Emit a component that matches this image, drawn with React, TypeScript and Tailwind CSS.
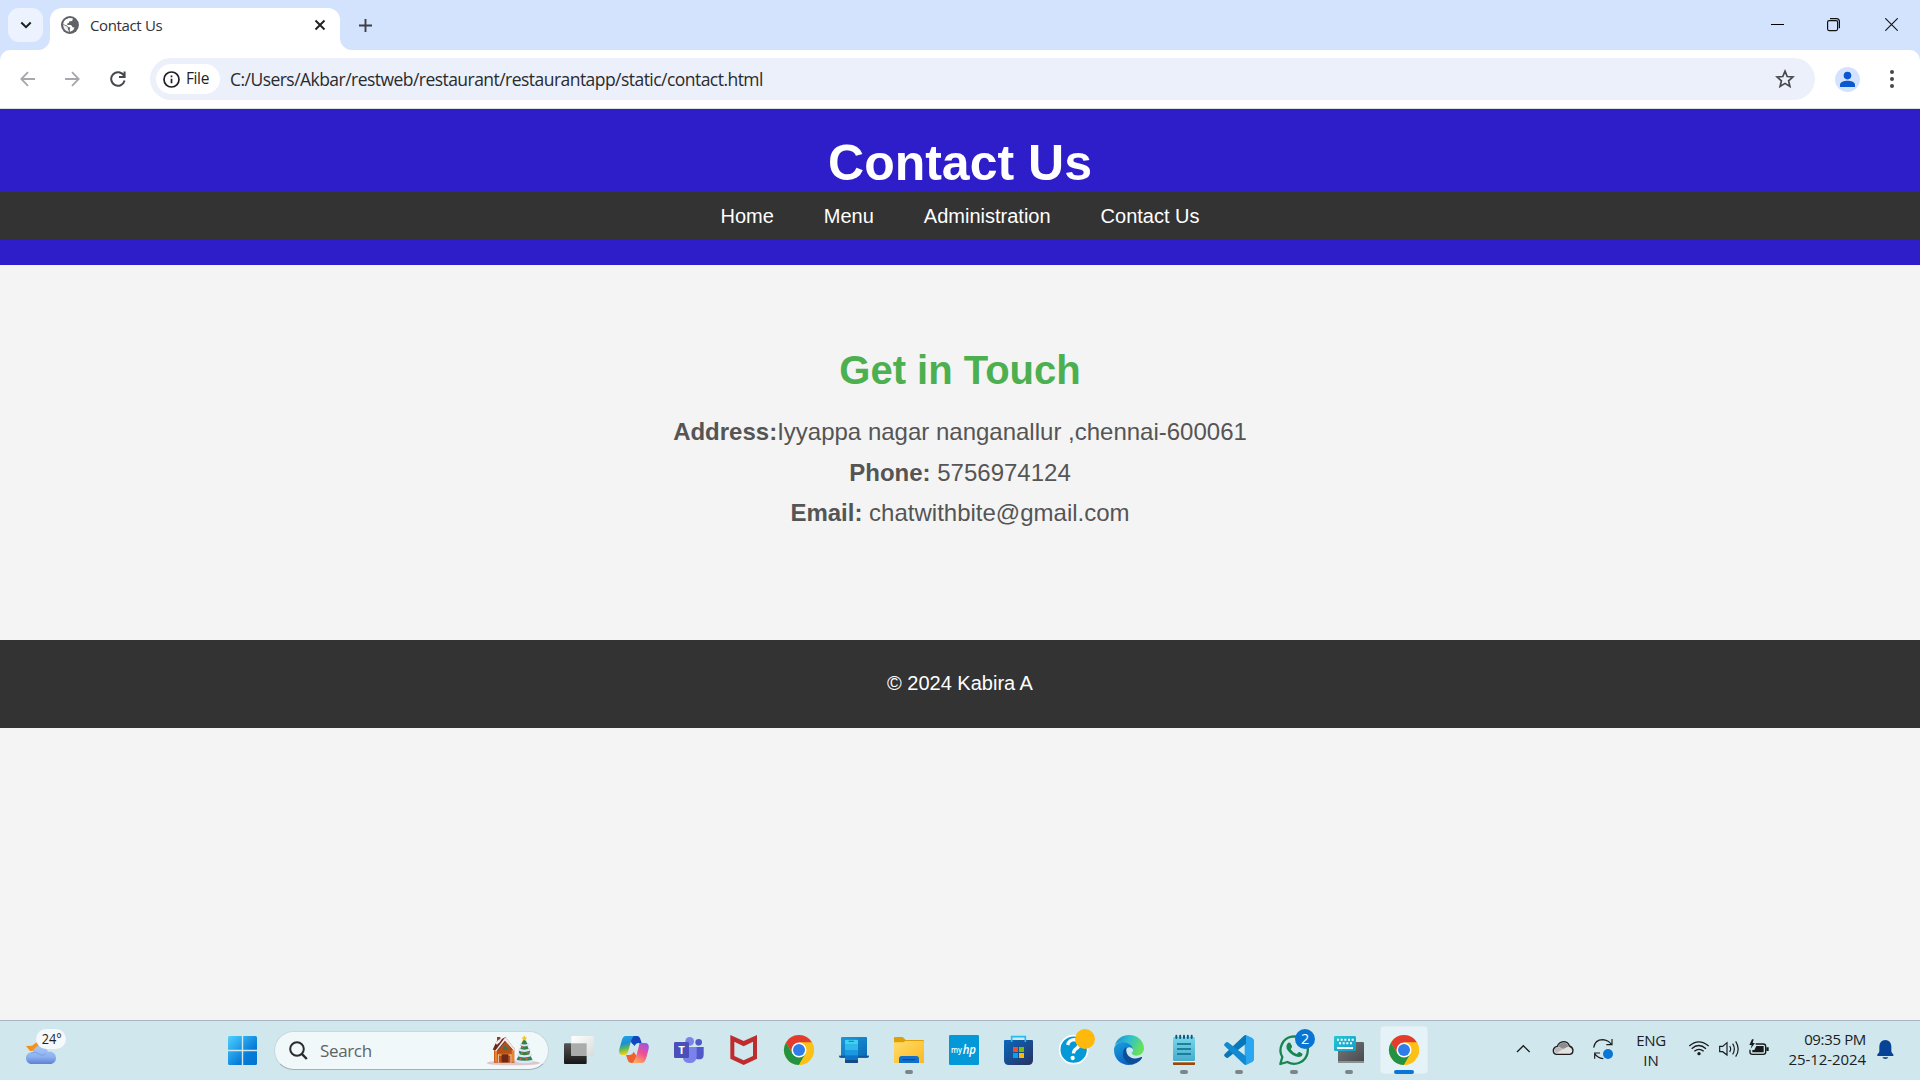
import React from "react";

const UI = "font-['Open_Sans','Noto_Sans',sans-serif]";

function Chrome({ x }: { x: number }) {
  return (
    <g transform={`translate(${x} 120)`}>
      <circle r="45" fill="#fbc116" />
      <path d="M-39 -22.5A45 45 0 0 1 39 -22.5L0 -22.5L-19.5 11.2Z" fill="#e33b2e" />
      <path d="M-39 -22.5A45 45 0 0 0 0 45L19.5 11.2L-19.5 11.2Z" fill="#229342" />
      <path d="M0 -22.5H39A45 45 0 0 1 0 45L19.5 11.2Z" fill="#fbc116" />
      <circle r="22.5" fill="#fff" />
      <circle r="18" fill="#2f7de9" />
    </g>
  );
}

function Cell({ left, children }: { left: number; children: React.ReactNode }) {
  return (
    <svg className="h-[60px] w-[55px] shrink-0" viewBox={`${left} 30 165 180`}>
      {children}
    </svg>
  );
}

function Running({ x }: { x: number }) {
  return <rect x={x - 12} y="180" width="24" height="12" rx="6" fill="#7c8587" />;
}

function TabStrip() {
  return (
    <div className="flex h-[50px] bg-[#d3e3fd]">
      <div className="mt-2 ml-2 flex h-[34px] w-[35px] items-center justify-center rounded-[11px] bg-[#ecf2fe]">
        <svg className="size-3" viewBox="0 0 12 12" fill="none" stroke="#1f1f1f" strokeWidth="2">
          <path d="M1.3 3.5 6 8.2 10.7 3.5" />
        </svg>
      </div>
      <svg className="-mr-3 ml-[-5px] mt-[38px] h-3 w-3" viewBox="0 0 12 12">
        <path d="M12 0A12 12 0 0 1 0 12H12Z" fill="#fff" />
      </svg>
      <div className="mt-2 ml-[12px] flex h-[42px] w-[290px] items-center rounded-t-[12px] bg-white pb-2">
        <svg className="ml-[11px] size-[18px]" viewBox="0 0 18 18">
          <circle cx="9" cy="9" r="9" fill="#5f6368" />
          <path d="M11.8 2.2 11.6 4.2Q11.2 5.4 9.6 5.3L8.2 5.6 7.7 7.1 6.2 7.6 6.4 9 9.6 9.1Q11.3 9.5 11.5 11.2L13.5 11.5Q12.8 14.7 9.2 15.8L8.7 13.4 9.4 11.6 7.2 10.9 5.6 9.2 2.1 8.2Q2.4 4.8 5 3.3L6.8 2.8 7.4 1.9Z" fill="#fff" />
          <path d="M2.1 8.7 5.2 10 7 11.7 6.9 13.3 8.6 15.8Q2.6 15.2 2.1 8.7Z" fill="#fff" opacity=".9" />
        </svg>
        <span className="ml-[11px] w-[225px] text-[15px] tracking-[-0.35px] text-[#303236]">Contact Us</span>
        <svg className="mr-[14px] size-[12px] shrink-0" viewBox="0 0 12 12" stroke="#1f1f1f" strokeWidth="1.9">
          <path d="M1.5 1.5 10.5 10.5M10.5 1.5 1.5 10.5" />
        </svg>
      </div>
      <svg className="mt-[38px] h-3 w-3" viewBox="0 0 12 12">
        <path d="M0 0A12 12 0 0 0 12 12H0Z" fill="#fff" />
      </svg>
      <svg className="mt-[19px] ml-[7px] size-[13px]" viewBox="0 0 13 13" stroke="#3c3f43" strokeWidth="1.9">
        <path d="M6.5 0V13M0 6.5H13" />
      </svg>
      <div className="ml-auto flex h-[50px] items-start">
        <svg className="mt-[17px] mr-[43px] h-4 w-[13px]" viewBox="0 0 13 16" stroke="#000" strokeWidth="1">
          <path d="M0 7.5H13" />
        </svg>
        <svg className="mt-[17px] mr-[45px] h-[15px] w-[13px]" viewBox="0 0 13 15" fill="none" stroke="#111" strokeWidth="1.2">
          <rect x=".6" y="3.6" width="10" height="10" rx="1.5" />
          <path d="M3 1.6H9.5Q12.4 1.6 12.4 4.5V11.2" />
        </svg>
        <svg className="mt-[18px] mr-[22px] size-[13px]" viewBox="0 0 13 13" stroke="#111" strokeWidth="1.1">
          <path d="M.3.3 12.7 12.7M12.7.3.3 12.7" />
        </svg>
      </div>
    </div>
  );
}

function Toolbar() {
  return (
    <div className="bg-[#d3e3fd]">
      <div className="flex h-[59px] items-center rounded-t-[10px] border-b border-[#dcdfe0] bg-white">
        <svg className="ml-5 h-4 w-[15px]" viewBox="0 0 15 16" fill="none" stroke="#a6a8ab" strokeWidth="1.8">
          <path d="M15 8H1.5M8 1.2 1.3 8 8 14.8" />
        </svg>
        <svg className="ml-[30px] h-4 w-[15px]" viewBox="0 0 15 16" fill="none" stroke="#a6a8ab" strokeWidth="1.8">
          <path d="M0 8H13.5M7 1.2 13.7 8 7 14.8" />
        </svg>
        <svg className="ml-[30px] size-4" viewBox="0 0 16 16" fill="none" stroke="#45484c" strokeWidth="2">
          <path d="M13.9 4.6A6.8 6.8 0 1 0 14.6 9.6M14.6 .5V6.1H9" />
        </svg>
        <div className="ml-6 flex h-[42px] w-[1665px] items-center rounded-full bg-[#ecf0fa]">
          <div className="ml-1.5 flex h-[30px] w-16 items-center rounded-full bg-white">
            <svg className="ml-[7px] size-[17px]" viewBox="0 0 17 17" fill="none" stroke="#1f1f1f" strokeWidth="1.7">
              <circle cx="8.5" cy="8.5" r="7.5" />
              <path d="M8.5 7.7V12.3M8.5 4.5V6.2" />
            </svg>
            <span className="ml-[6px] text-[15.5px] tracking-[-0.4px] text-[#1f1f1f]">File</span>
          </div>
          <span className="ml-[10px] text-[17.5px] tracking-[-0.54px] whitespace-nowrap text-[#292b2e]">
            C:/Users/Akbar/restweb/restaurant/restaurantapp/static/contact.html
          </span>
          <svg className="mr-5 ml-auto size-5" viewBox="0 0 20 20" fill="none" stroke="#45484c" strokeWidth="1.7">
            <path d="M10 2.2 12.2 7.5 17.9 8 13.6 11.8 14.9 17.4 10 14.4 5.1 17.4 6.4 11.8 2.1 8 7.8 7.5Z" />
          </svg>
        </div>
        <svg className="ml-5 size-[25px]" viewBox="0 0 25 25">
          <circle cx="12.5" cy="12.5" r="12.5" fill="#d3e3fd" />
          <circle cx="12.5" cy="8.6" r="3.8" fill="#0b57d0" />
          <path d="M5 20V17.8C5 15.2 9 13.8 12.5 13.8S20 15.2 20 17.8V20Z" fill="#0b57d0" />
        </svg>
        <svg className="ml-[30px] h-[18px] w-1" viewBox="0 0 4 18" fill="#45484c">
          <circle cx="2" cy="2" r="2" />
          <circle cx="2" cy="9" r="2" />
          <circle cx="2" cy="16" r="2" />
        </svg>
      </div>
    </div>
  );
}

function Page() {
  return (
    <div className="flex h-[911px] flex-col bg-[#f4f4f4] text-center font-['Liberation_Sans',Arial,sans-serif]">
      <header className="h-[156px] shrink-0 bg-[#2e1ec9] pt-[25px] text-white">
        <h1 className="h-[58px] text-[50px] leading-[59px] font-bold">Contact Us</h1>
        <nav className="flex h-12 justify-center gap-[50px] bg-[#333] text-xl leading-[49px]">
          <a>Home</a>
          <a>Menu</a>
          <a>Administration</a>
          <a>Contact Us</a>
        </nav>
      </header>
      <main className="h-[375px] shrink-0 pt-[82px] text-2xl text-[#555]">
        <h2 className="mb-5 text-[40px] leading-[46px] font-bold text-[#4caf50]">Get in Touch</h2>
        <p className="mb-[2.3px] leading-[38.4px]"><b>Address:</b>Iyyappa nagar nanganallur ,chennai-600061</p>
        <p className="mb-[2.3px] leading-[38.4px]"><b>Phone:</b> 5756974124</p>
        <p className="leading-[38.4px]"><b>Email:</b> chatwithbite@gmail.com</p>
      </main>
      <footer className="h-[88px] shrink-0 bg-[#333] text-xl leading-[86px] text-white">© 2024 Kabira A</footer>
    </div>
  );
}

function Apps() {
  return (
    <div className="ml-[2px] flex">
      <Cell left={33}>
        <defs>
          <linearGradient id="tvd" x2="0" y2="1"><stop stopColor="#555" /><stop offset="1" stopColor="#171717" /></linearGradient>
          <linearGradient id="tvl" x2="1" y2="1"><stop stopColor="#fff" /><stop offset="1" stopColor="#d9dbdb" /></linearGradient>
        </defs>
        <rect x="72" y="100" width="68" height="62" rx="3" fill="url(#tvd)" />
        <rect x="94" y="78" width="67" height="60" rx="3" fill="url(#tvl)" />
        <rect x="94" y="100" width="46" height="38" fill="#aaabab" />
      </Cell>
      <Cell left={198}>
        <defs>
          <linearGradient id="cpa" x2=".2" y2="1"><stop stopColor="#20a7e8" /><stop offset=".45" stopColor="#1e8fd0" /><stop offset=".7" stopColor="#5cb85c" /><stop offset="1" stopColor="#f2d20c" /></linearGradient>
          <linearGradient id="cpb" x1=".8" y1="0" x2=".3" y2="1"><stop stopColor="#9a55e8" /><stop offset=".5" stopColor="#f05090" /><stop offset="1" stopColor="#ffae5c" /></linearGradient>
        </defs>
        <path d="M270 78H291Q299 78 302 90L305 99H296Q287 99 284 108L274 98Z" fill="#1445c0" />
        <path d="M258 135H270Q278 134 281 125L290 138L280 159H275Q266 159 263 150Z" fill="#f1602f" />
        <path d="M256 78H283Q277 80 273 94L264 126Q261 135 253 135H247Q235 135 238 118L245 92Q249 78 256 78Z" fill="url(#cpa)" />
        <path d="M298 99H315Q329 99 326 116L319 143Q314 159 306 159H275Q283 157 287 145L295 115Q298 104 298 99Z" fill="url(#cpb)" />
      </Cell>
      <Cell left={363}>
        <circle cx="449" cy="94" r="13" fill="#7b83eb" />
        <circle cx="476" cy="97" r="10" fill="#5059c9" />
        <path d="M466 111H491V134Q491 148 477 148Q466 148 464 140Z" fill="#5059c9" />
        <path d="M428 111H470V137Q470 159 449 159Q430 159 428 140Z" fill="#7b83eb" />
        <rect x="402" y="96" width="45" height="48" rx="4" fill="#4a50b8" />
        <text x="424.5" y="132" fontSize="34" fontWeight="700" textAnchor="middle" fill="#fff" fontFamily="Open Sans">T</text>
      </Cell>
      <Cell left={528}>
        <path d="M571 75 611 93 651 75V146L611 165 571 146Z" fill="#bf2c2e" />
        <path d="M583 95 611 109 639 95V138L611 151 583 138Z" fill="#cfe7ed" />
      </Cell>
      <Cell left={693}><Chrome x={777} /></Cell>
      <Cell left={18}>
        <defs><linearGradient id="pl" x2="1" y2="1"><stop stopColor="#1c98df" /><stop offset="1" stopColor="#0869b3" /></linearGradient></defs>
        <path d="M66 81H138Q141 81 141 84V137H147Q147 143 141 143H63Q57 143 57 137H63V84Q63 81 66 81Z" fill="url(#pl)" />
        <path d="M57 137H147Q147 143 141 143H63Q57 143 57 137Z" fill="#0a5a9e" />
        <rect x="75" y="89" width="39" height="70" rx="3" fill="#0b74c9" />
        <path d="M75 92Q75 89 78 89H111Q114 89 114 92V104H75Z" fill="#3fd0f2" />
        <rect x="75" y="104" width="39" height="16" fill="#30b8ea" />
        <rect x="75" y="120" width="39" height="16" fill="#1b98df" />
        <path d="M75 150H114V156Q114 159 111 159H78Q75 159 75 156Z" fill="#124b86" />
        <path d="M86 94H102" stroke="#117ca8" strokeWidth="3" />
      </Cell>
      <Cell left={183}>
        <defs><linearGradient id="fo" x2="1" y2="1"><stop stopColor="#ffdc6c" /><stop offset="1" stopColor="#fbb91f" /></linearGradient></defs>
        <path d="M222 84Q222 81 225 81H246Q249 81 252 85L257 90H309Q312 90 312 94V110H222Z" fill="#dfa006" />
        <path d="M222 97H249Q252 97 255 94L257 93H308Q312 93 312 97V159H222Z" fill="url(#fo)" />
        <path d="M237 159V146Q237 138 245 138H289Q297 138 297 146V159Z" fill="#1070cc" />
        <path d="M248 149H286" stroke="#0b4a8d" strokeWidth="3.5" />
        <Running x={267} />
      </Cell>
      <Cell left={348}>
        <rect x="387" y="75" width="90" height="90" rx="4" fill="#0399d8" />
        <text x="393" y="128" fontSize="24" fontWeight="600" textLength="33" lengthAdjust="spacingAndGlyphs" fill="#fff" fontFamily="Open Sans">my</text>
        <text x="428" y="132" fontSize="39" fontWeight="600" fontStyle="italic" textLength="40" lengthAdjust="spacingAndGlyphs" fill="#fff" fontFamily="Open Sans">hp</text>
      </Cell>
      <Cell left={513}>
        <defs><linearGradient id="st" x2="1" y2="1"><stop stopColor="#0968bd" /><stop offset="1" stopColor="#29315f" /></linearGradient></defs>
        <path d="M552 93Q552 90 555 90H636Q639 90 639 93V150Q639 165 624 165H567Q552 165 552 150Z" fill="url(#st)" />
        <path d="M575 96V80H616V96" fill="none" stroke="#29bcf2" strokeWidth="5" />
        <rect x="579" y="111" width="15" height="15" fill="#f25022" />
        <rect x="597" y="111" width="15" height="15" fill="#7fba00" />
        <rect x="579" y="129" width="15" height="15" fill="#00a4ef" />
        <rect x="597" y="129" width="15" height="15" fill="#ffb900" />
      </Cell>
      <Cell left={678}>
        <circle cx="761" cy="119" r="42" fill="#0699d7" stroke="#fff" strokeWidth="5" />
        <path d="M743 105Q747 89 763 89Q779 90 777 104Q776 112 766 118Q761 122 760 130" fill="none" stroke="#fff" strokeWidth="10" />
        <circle cx="758" cy="144" r="6.5" fill="#fff" />
        <circle cx="795" cy="87" r="30" fill="#ffb90d" />
      </Cell>
      <Cell left={3}>
        <defs>
          <linearGradient id="eda" x2="1" y2=".4"><stop stopColor="#1986d1" /><stop offset=".5" stopColor="#2fc0cf" /><stop offset="1" stopColor="#67e05c" /></linearGradient>
          <linearGradient id="edb" x2=".5" y2="1"><stop stopColor="#1aa2dd" /><stop offset="1" stopColor="#0b61c4" /></linearGradient>
        </defs>
        <path d="M44 107C50 86 67 75 87 75C113 75 132 94 132 115C132 129 121 137 110 137C101 137 95 133 95 129C98 126 100 123 99 117C96 104 80 96 64 97C53 98 46 103 44 107Z" fill="url(#eda)" />
        <path d="M42 120C42 106 53 96 68 96C84 96 98 106 99 118C92 107 78 111 76 124C74 140 84 154 101 158Q94 165 87 165C61 165 42 146 42 120Z" fill="url(#edb)" />
        <path d="M79 112C68 117 65 137 75 150Q83 162 96 164C109 161 121 153 126 144C127 141 125 140 122 142C105 150 85 143 80 128Q78 119 79 112Z" fill="#0c4f99" />
      </Cell>
      <Cell left={168}>
        <defs><linearGradient id="np" x2="0" y2="1"><stop stopColor="#79d6e9" /><stop offset="1" stopColor="#45adcd" /></linearGradient></defs>
        <rect x="219" y="150" width="66" height="15" rx="2" fill="#994807" />
        <rect x="219" y="148" width="66" height="9" fill="#f3f3f3" />
        <rect x="219" y="81" width="66" height="72" rx="3" fill="url(#np)" />
        <path d="M229 77V84M240.500 77V84M252 77V84M263.500 77V84M275 77V84" stroke="#075b7c" strokeWidth="6" strokeLinecap="round" />
        <path d="M231 102H273M231 117H273M231 132H273" stroke="#096987" strokeWidth="5" />
        <Running x={252} />
      </Cell>
      <Cell left={333}>
        <path d="M438 75 457 84Q462 87 462 92V148Q462 153 457 156L438 165 434 155V85Z" fill="#2aa5ef" />
        <path d="M438 75V101L384 143Q380 145 377 142L373 138Q371 135 374 132L431 78Q434 75 438 75Z" fill="#0877b9" />
        <path d="M438 165V139L384 97Q380 95 377 98L373 102Q371 105 374 108L431 162Q434 165 438 165Z" fill="#1389cf" />
        <Running x={417} />
      </Cell>
      <Cell left={498}>
        <path d="M541 162 547 141A41 41 0 1 1 562 156Z" fill="none" stroke="#188451" strokeWidth="7" strokeLinejoin="round" />
        <path d="M562 101Q566 95 571 99L576 108Q577 112 572 117Q579 129 591 132Q595 125 599 126L607 131Q609 133 605 138Q598 144 586 139Q569 132 560 116Q557 108 562 101Z" fill="#188451" />
        <circle cx="615" cy="87" r="30" fill="#0875d5" />
        <text x="615" y="102" fontSize="43" textAnchor="middle" fill="#fff" fontFamily="Open Sans">2</text>
        <Running x={582} />
      </Cell>
      <Cell left={663}>
        <defs>
          <linearGradient id="kbd" x2="1" y2="1"><stop stopColor="#77797b" /><stop offset="1" stopColor="#46494b" /></linearGradient>
          <linearGradient id="kbl" x2="1" y2="1"><stop stopColor="#24c7d3" /><stop offset="1" stopColor="#149dcc" /></linearGradient>
        </defs>
        <rect x="714" y="96" width="78" height="63" rx="4" fill="url(#kbd)" />
        <path d="M714 153H792V155Q792 159 788 159H718Q714 159 714 155Z" fill="#8d9092" />
        <rect x="702" y="78" width="66" height="45" rx="4" fill="url(#kbl)" />
        <path d="M711 89H761M717 100H756" stroke="#fff" strokeWidth="6" strokeDasharray="6 5" />
        <path d="M711 114H759" stroke="#fff" strokeWidth="6" />
        <Running x={747} />
      </Cell>
      <Cell left={828}>
        <rect x="840" y="48" width="144" height="144" rx="12" fill="#e5f2f7" stroke="#d7e5ea" strokeWidth="2" />
        <Chrome x={912} />
        <rect x="882" y="180" width="60" height="12" rx="6" fill="#0877d6" />
      </Cell>
    </div>
  );
}

function Tray() {
  return (
    <div className="ml-auto flex h-[59px] items-center text-[15px] text-[#1b2022]">
      <svg className="h-[59px] w-[120px]" viewBox="60 33 360 177" fill="none" stroke="#1c1c1c" strokeWidth="4">
        <path d="M81 129 100 110 119 129" />
        <path d="M199 136Q189 134 190 123Q192 113 202 112Q207 99 220 98Q235 98 238 111Q248 114 249 124Q248 136 238 136Z" fill="#e2e2e2" />
        <path d="M203 112Q208 101 220 101Q233 102 236 112L220 120Z" fill="#8c8c8c" stroke="none" />
        <path d="M193 126Q193 114 204 114L220 120 199 132Z" fill="#b9b9b9" stroke="none" />
        <path d="M311 116Q315 92 338 92Q355 93 364 106M366 90V107H349M314 149V132H330M314 134Q322 147 340 149" strokeWidth="3.500" />
        <circle cx="354" cy="135" r="15" fill="#0877d6" stroke="none" />
      </svg>
      <div className="w-[42px] text-center leading-5"><div className="tracking-[-0.4px]">ENG</div><div>IN</div></div>
      <svg className="ml-4 h-[59px] w-[82px]" viewBox="591 33 246 177" fill="none" stroke="#171b1d" strokeWidth="4">
        <path d="M595 111Q623 86 653 111M602 119Q623 100 645 119M610 127Q624 115 638 127" />
        <circle cx="624" cy="134" r="5" fill="#171b1d" stroke="none" />
        <path d="M686 112H695L708 101V138L695 128H686ZM716 111Q722 119 716 129M725 104Q735 120 725 136M734 97Q749 120 734 143" strokeWidth="3.500" />
        <path d="M794 105H817Q824 105 824 112V130Q824 136 817 136H784Q777 136 777 130V122" />
        <path d="M796 111H818V130H784V123H790Z" fill="#171b1d" stroke="none" />
        <path d="M826 115H833V126H826ZM783 91 775 108H782L779 119 792 102H785L788 91Z" fill="#171b1d" stroke="none" />
      </svg>
      <div className="ml-[16px] w-[80px] pb-0.5 text-right leading-5 whitespace-nowrap">
        <div className="tracking-[-0.35px]">09:35 PM</div>
        <div className="tracking-[-0.08px]">25-12-2024</div>
      </div>
      <svg className="mr-[26px] ml-[11px] h-[59px] w-[17px]" viewBox="1160 33 51 177" fill="#064396">
        <path d="M1161 141V136Q1166 133 1167 127V112Q1168 94 1185 93Q1202 94 1203 112V127Q1204 133 1209 136V141ZM1176 145H1194Q1192 150 1185 150Q1178 150 1176 145Z" />
      </svg>
    </div>
  );
}

function Taskbar() {
  return (
    <div className="flex h-[60px] bg-[#cfe7ed] shadow-[inset_0_1px_0_#a9b4c0]">
      <svg className="h-[60px] w-[75px]" viewBox="0 30 225 180">
        <defs><linearGradient id="cl" x2="0" y2="1"><stop stopColor="#a9c8f6" /><stop offset=".6" stopColor="#8eb2ef" /><stop offset="1" stopColor="#5c82d6" /></linearGradient></defs>
        <path d="M78 108 96 107 111 96 119 108 101 122 90 123Z" fill="#f2921c" />
        <path d="M95 162C85 162 78 154 78 144C78 133 87 126 98 127C102 114 111 106 122 107C136 108 142 119 144 125C158 122 168 132 168 144C168 155 160 162 151 162Z" fill="url(#cl)" />
        <path d="M93 130Q106 124 115 131Q127 140 137 131" fill="none" stroke="#719be2" strokeWidth="4" opacity=".6" />
        <rect x="108" y="57" width="90" height="60" rx="30" fill="#f5f9fb" />
        <text x="125" y="102" fontSize="42" textLength="60" lengthAdjust="spacingAndGlyphs" fill="#222" fontFamily="Open Sans">24°</text>
      </svg>
      <svg className="mt-4 ml-[153px] size-[29px]" viewBox="0 0 29 29">
        <defs><linearGradient id="wi" x2="1" y2="1" gradientUnits="userSpaceOnUse" gradientTransform="scale(29)"><stop stopColor="#4cd2ff" /><stop offset=".65" stopColor="#087cd9" /><stop offset="1" stopColor="#0374d0" /></linearGradient></defs>
        <path d="M1.500 0H13.800V13.800H0V1.500Q0 0 1.500 0ZM15.200 0H27.500Q29 0 29 1.500V13.800H15.200ZM0 15.200H13.800V29H1.500Q0 29 0 27.500ZM15.200 15.200H29V27.500Q29 29 27.500 29H15.200Z" fill="url(#wi)" />
      </svg>
      <div className="mt-[11px] ml-[17px] flex h-[39px] w-[275px] items-center rounded-full border border-b-[#9fb0bb] border-[#c5d9df] bg-[#f0f8fa]">
        <svg className="ml-[14px] size-[19px]" viewBox="0 0 19 19" fill="none" stroke="#292c2e" strokeWidth="2">
          <circle cx="8" cy="8" r="6.800" />
          <path d="M12.800 12.800 17.800 18" strokeWidth="2.400" />
        </svg>
        <span className="ml-[12px] text-[17px] tracking-[-0.35px] text-[#5e6365]">Search</span>
        <svg className="mr-[8px] ml-auto h-[31px] w-[54px]" viewBox="678 79 162 93">
          <ellipse cx="760" cy="163" rx="80" ry="7" fill="#dfc7c9" />
          <rect x="711" y="85" width="10" height="22" fill="#923c25" />
          <path d="M702 117 733 91 763 120V162H702Z" fill="#b95018" />
          <path d="M704 121H711V160H704ZM755 121H762V160H755ZM716 135H753V142H716Z" fill="#e6852c" />
          <path d="M698 123 709 99 737 85 764 122 756 125 737 98 714 125Z" fill="#632b25" />
          <path d="M705 103 716 93 727 89 720 100 711 108ZM738 86 765 123 761 126 735 96 709 128 705 127 734 88Z" fill="#f5e8e3" />
          <path d="M726 123 735 109 748 123Z" fill="#367856" />
          <rect x="725" y="137" width="20" height="24" fill="#6e2916" />
          <path d="M715 137V162M753 137V162" stroke="#f4d5bc" strokeWidth="3" />
          <path d="M793 89 805 110 802 112 811 130 808 133 820 159H767L779 134 776 131 784 113 781 110Z" fill="#338344" />
          <path d="M781 103Q793 112 806 103L809 108Q794 118 779 109ZM777 118Q793 129 810 118L813 124Q794 135 774 125ZM773 134Q793 146 815 134L817 141Q794 151 770 142ZM767 153Q793 159 820 153L820 160Q793 168 767 160Z" fill="#dbe5ff" />
          <path d="M793 80 796 86 802 87 797 91 799 97 793 94 787 97 789 91 784 87 790 86Z" fill="#f7c32b" />
          <g fill="#e05c3f"><circle cx="787" cy="116" r="3" /><circle cx="803" cy="131" r="3" /><circle cx="786" cy="134" r="3" /><circle cx="800" cy="150" r="3" /><circle cx="781" cy="151" r="3" /></g>
        </svg>
      </div>
      <Apps />
      <Tray />
    </div>
  );
}

export default function App() {
  return (
    <div className={`h-[1080px] w-[1920px] overflow-hidden ${UI}`}>
      <TabStrip />
      <Toolbar />
      <Page />
      <Taskbar />
    </div>
  );
}
